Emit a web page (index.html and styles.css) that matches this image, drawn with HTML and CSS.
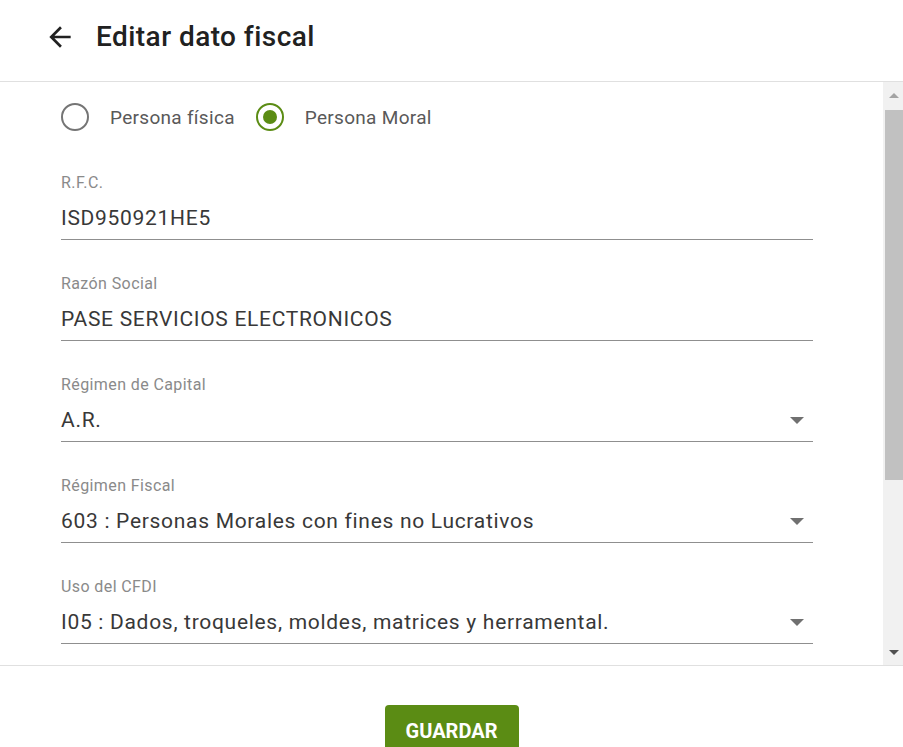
FILE: index.html
```html
<!DOCTYPE html>
<html lang="es">
<head>
    <meta charset="UTF-8">
    <meta name="viewport" content="width=device-width, initial-scale=1.0">
    <title>Editar dato fiscal</title>
    <link rel="stylesheet" href="styles.css">
</head>
<body>
    <!-- Header -->
    <header class="top-bar">
        <button class="btn-back" aria-label="Regresar">
            <svg viewBox="0 0 24 24" width="32" height="32">
                <path d="M20 11H7.83l5.59-5.59L12 4l-8 8 8 8 1.41-1.41L7.83 13H20v-2z" fill="#212121"/>
            </svg>
        </button>
        <h1>Editar dato fiscal</h1>
    </header>

    <!-- Scrollable form panel -->
    <div class="panel">
        <form class="form-area">
            <div class="radio-row">
                <label class="radio">
                    <span class="radio-circle"></span>
                    Persona física
                </label>
                <label class="radio checked">
                    <span class="radio-circle"></span>
                    Persona Moral
                </label>
            </div>

            <div class="field">
                <div class="field-label">R.F.C.</div>
                <div class="field-value">ISD950921HE5</div>
            </div>

            <div class="field">
                <div class="field-label">Razón Social</div>
                <div class="field-value">PASE SERVICIOS ELECTRONICOS</div>
            </div>

            <div class="field select">
                <div class="field-label">Régimen de Capital</div>
                <div class="field-value">A.R.<span class="caret"></span></div>
            </div>

            <div class="field select">
                <div class="field-label">Régimen Fiscal</div>
                <div class="field-value">603 : Personas Morales con fines no Lucrativos<span class="caret"></span></div>
            </div>

            <div class="field select">
                <div class="field-label">Uso del CFDI</div>
                <div class="field-value">I05 : Dados, troqueles, moldes, matrices y herramental.<span class="caret"></span></div>
            </div>
        </form>

        <!-- Scrollbar -->
        <div class="scrollbar">
            <div class="scroll-btn"><span class="arrow-up"></span></div>
            <div class="scroll-track"><div class="scroll-thumb"></div></div>
            <div class="scroll-btn"><span class="arrow-down"></span></div>
        </div>
    </div>

    <footer class="actions">
        <button class="btn-save">GUARDAR</button>
    </footer>
</body>
</html>
```

FILE: styles.css
```css
body {
    margin: 0;
    font-family: Roboto, "Liberation Sans", Arial, sans-serif;
    background-color: #fff;
    color: #212121;
    overflow: hidden;
}

/* Header */
.top-bar {
    display: flex;
    align-items: center;
    padding-left: 44px;
    border-bottom: 1px solid #e0e0e0;
    box-sizing: border-box;
    height: 82px;
}

.btn-back {
    background: none;
    border: none;
    padding: 0;
    width: 32px;
    height: 32px;
    margin-top: -8px;
    cursor: pointer;
}

.btn-back svg {
    display: block;
}

.top-bar h1 {
    margin: -8px 0 0 20px;
    font-size: 28px;
    font-weight: 500;
    letter-spacing: 0.45px;
    color: #212121;
}

/* Panel */
.panel {
    display: flex;
    height: 584px;
    border-bottom: 1px solid #e0e0e0;
    box-sizing: border-box;
}

.form-area {
    flex: 1;
    padding: 21px 0 0 61px;
    overflow: hidden;
}

.radio-row {
    display: flex;
    align-items: center;
    height: 28px;
    margin-bottom: 42px;
}

.radio {
    display: flex;
    align-items: center;
    font-size: 19px;
    letter-spacing: 0.3px;
    color: #595959;
    margin-right: 21px;
}

.radio-circle {
    width: 24px;
    height: 24px;
    border: 2px solid #757575;
    border-radius: 50%;
    margin-right: 21px;
    box-sizing: content-box;
    position: relative;
}

.radio.checked .radio-circle {
    border-color: #5b8c14;
}

.radio.checked .radio-circle::after {
    content: "";
    position: absolute;
    top: 5px;
    left: 5px;
    width: 14px;
    height: 14px;
    border-radius: 50%;
    background-color: #5b8c14;
}

/* Fields */
.field {
    width: 752px;
    margin-bottom: 34px;
}

.field-label {
    font-size: 16px;
    letter-spacing: 0.4px;
    line-height: 20px;
    color: #8a8a8a;
}

.field-value {
    display: flex;
    align-items: center;
    margin-top: 10px;
    height: 30px;
    padding-bottom: 6px;
    font-size: 21px;
    letter-spacing: 0.7px;
    color: #383838;
    border-bottom: 1px solid #8f8f8f;
}

.caret {
    margin-left: auto;
    margin-right: 9px;
    width: 0;
    height: 0;
    border-left: 7px solid transparent;
    border-right: 7px solid transparent;
    border-top: 7px solid #707070;
}

/* Scrollbar */
.scrollbar {
    width: 20px;
    display: flex;
    flex-direction: column;
    background-color: #f1f1f1;
}

.scroll-btn {
    height: 26px;
    display: flex;
    align-items: center;
    justify-content: center;
    padding-left: 2px;
}

.arrow-up {
    width: 0;
    height: 0;
    border-left: 5px solid transparent;
    border-right: 5px solid transparent;
    border-bottom: 5px solid #a3a3a3;
}

.arrow-down {
    width: 0;
    height: 0;
    border-left: 5px solid transparent;
    border-right: 5px solid transparent;
    border-top: 5px solid #505050;
}

.scroll-track {
    flex: 1;
    padding: 2px 0 0 2px;
}

.scroll-thumb {
    height: 370px;
    background-color: #c1c1c1;
}

/* Footer */
.actions {
    display: flex;
    justify-content: center;
    padding-top: 39px;
}

.btn-save {
    width: 134px;
    height: 52px;
    background-color: #5b8c14;
    color: white;
    border: none;
    border-radius: 4px;
    font-family: Roboto, "Liberation Sans", Arial, sans-serif;
    font-size: 20px;
    font-weight: 700;
    cursor: pointer;
    padding: 0;
}
```
